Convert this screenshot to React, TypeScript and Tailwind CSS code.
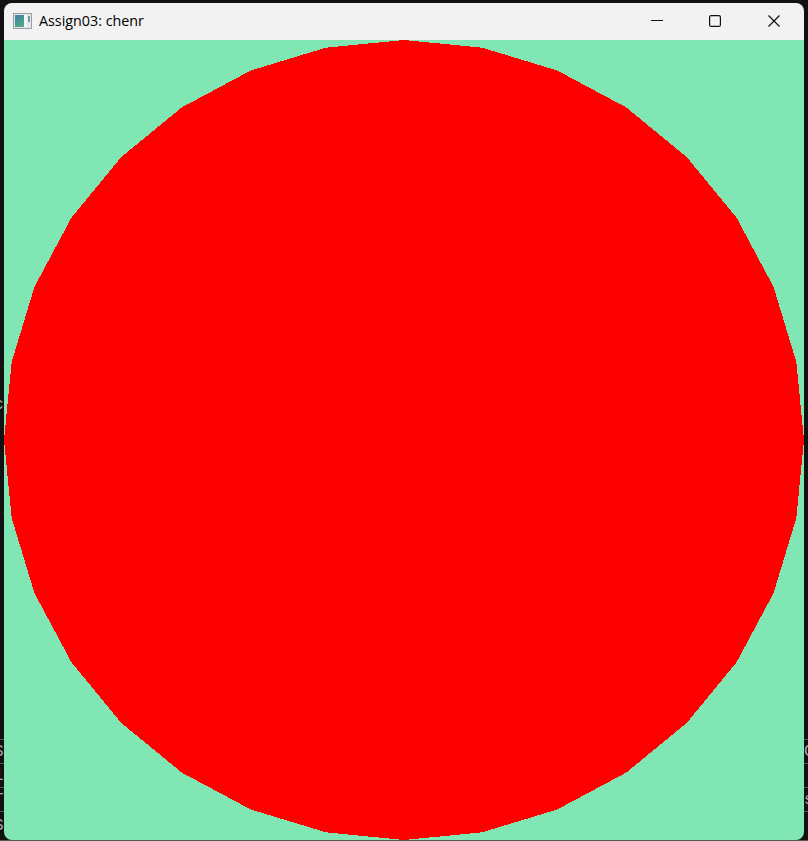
const SIDES = 32;
const points = Array.from({ length: SIDES }, (_, i) => {
  const a = (i / SIDES) * Math.PI * 2;
  return `${400 + 400 * Math.cos(a)},${400 + 400 * Math.sin(a)}`;
}).join(" ");

// terminal rows peeking out from behind the window
const rows = [
  { left: "S", right: "C", h: "h-[24px]" },
  { left: "l", right: "", h: "h-[24px]" },
  { left: "T", right: "s", h: "h-[24px]" },
  { left: "S", right: "", h: "h-[30px]" },
];

function AppIcon() {
  return (
    <svg width="20" height="16" viewBox="0 0 20 16" className="shrink-0">
      <defs>
        <linearGradient id="glview" x1="0" y1="0" x2="0.6" y2="1">
          <stop offset="0" stopColor="#3f7fa8" />
          <stop offset="1" stopColor="#4fa88a" />
        </linearGradient>
      </defs>
      <rect x="0.5" y="0.5" width="18" height="15" fill="#e4e6e8" stroke="#9a9ea3" />
      <rect x="2" y="2" width="9" height="12" fill="url(#glview)" />
      <rect x="11" y="2" width="3" height="12" fill="#f4f5f5" />
      <rect x="15" y="3" width="2" height="6" fill="#6f9fa8" />
    </svg>
  );
}

function Backdrop() {
  return (
    <div className="absolute inset-0 flex flex-col font-['Liberation_Mono',monospace] text-[16px] leading-none text-[#a8a8a8]">
      <div className="mt-[397px] -ml-[6px]">c</div>
      <div className="flex-1" />
      {rows.map((row, i) => (
        <div key={i} className={`flex items-center justify-between border-t border-[#555555] last:border-b ${row.h}`}>
          <span className="-ml-[6px]">{row.left}</span>
          <span className="-mr-[6px] w-[10px]">{row.right}</span>
        </div>
      ))}
    </div>
  );
}

export default function App() {
  return (
    <div className="relative h-[841px] w-[808px] overflow-hidden bg-[#111111]">
      <Backdrop />
      <div className="relative ml-1 mt-[3px] w-[800px] overflow-hidden rounded-lg">
        {/* Title bar */}
        <div className="flex h-[37px] items-center bg-[#f2f2f2] pb-px pl-[9px]">
          <AppIcon />
          <span className="ml-[6px] font-['Open_Sans',sans-serif] text-[14.3px] text-black">Assign03: chenr</span>
          <div className="ml-auto flex items-center gap-[46px] pr-[24px]">
            <svg width="12" height="12" viewBox="0 0 12 12">
              <path d="M0 5.5H12" stroke="#111" strokeWidth="1" />
            </svg>
            <svg width="12" height="12" viewBox="0 0 12 12">
              <rect x="0.6" y="0.6" width="10.8" height="10.8" rx="1.5" fill="none" stroke="#111" strokeWidth="1.2" />
            </svg>
            <svg width="12" height="12" viewBox="0 0 12 12" className="ml-px">
              <path d="M0.5 0.5L11.5 11.5M11.5 0.5L0.5 11.5" stroke="#111" strokeWidth="1.2" />
            </svg>
          </div>
        </div>
        {/* GL viewport */}
        <div className="h-[800px] w-[800px] bg-[#80e6b3]">
          <svg width="800" height="800" viewBox="0 0 800 800" shapeRendering="crispEdges" className="block">
            <polygon points={points} fill="#ff0000" />
          </svg>
        </div>
      </div>
    </div>
  );
}
